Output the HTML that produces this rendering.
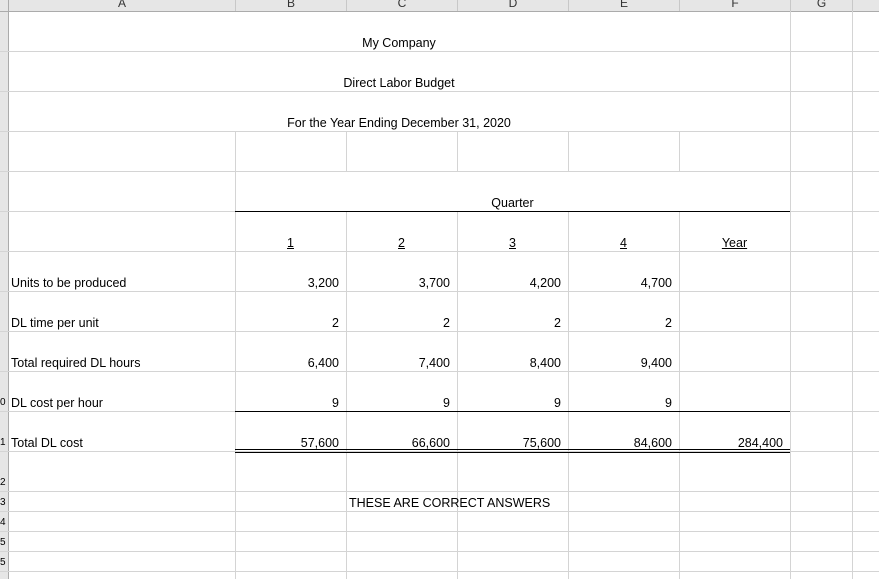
<!DOCTYPE html>
<html><head><meta charset="utf-8"><style>
body{margin:0;width:879px;height:579px;overflow:hidden;background:#fff;position:relative;font-family:"Liberation Sans",Arial,sans-serif;font-size:12.5px;color:#000}
.h{position:absolute;left:0;width:879px;height:1px;background:#d4d4d4}
.v{position:absolute;top:11px;width:1px;height:568px;background:#d4d4d4}
.t{position:absolute;white-space:nowrap;line-height:14px}
.r{text-align:right}
.c{text-align:center}
.b{position:absolute;height:1px;background:#000}
.hd{position:absolute;top:0;height:11px;background:#e6e6e6;border-right:1px solid #c8c8c8;font-size:12px;line-height:6px;text-align:center;overflow:hidden;color:#333}
</style></head><body>
<div class="hd" style="left:0;width:8px;height:579px;background:#e6e6e6"></div>
<div class="hd" style="left:9px;width:226px">A</div>
<div class="hd" style="left:236px;width:110px">B</div>
<div class="hd" style="left:347px;width:110px">C</div>
<div class="hd" style="left:458px;width:110px">D</div>
<div class="hd" style="left:569px;width:110px">E</div>
<div class="hd" style="left:680px;width:110px">F</div>
<div class="hd" style="left:791px;width:61px">G</div>
<div class="hd" style="left:853px;width:26px"></div>
<div style="position:absolute;left:0;top:11px;width:879px;height:1px;background:#ababab"></div>
<div style="position:absolute;left:8px;top:0;width:1px;height:579px;background:#ababab"></div>

<div class="h" style="top:51px"></div><div class="h" style="top:91px"></div><div class="h" style="top:131px"></div><div class="h" style="top:171px"></div><div class="h" style="top:211px"></div><div class="h" style="top:251px"></div><div class="h" style="top:291px"></div><div class="h" style="top:331px"></div><div class="h" style="top:371px"></div><div class="h" style="top:411px"></div><div class="h" style="top:451px"></div><div class="h" style="top:491px"></div><div class="h" style="top:511px"></div><div class="h" style="top:531px"></div><div class="h" style="top:551px"></div><div class="h" style="top:571px"></div>
<div style="position:absolute;left:9px;top:12px;width:781px;height:119px;background:#fff"></div>
<div class="h" style="top:51px;left:9px;width:870px"></div><div class="h" style="top:91px;left:9px;width:870px"></div>

<div class="v" style="left:235px;top:131px;height:448px"></div>
<div class="v" style="left:346px;top:131px;height:448px"></div>
<div class="v" style="left:457px;top:131px;height:40px"></div><div class="v" style="left:457px;top:211px;height:368px"></div>
<div class="v" style="left:568px;top:131px;height:40px"></div><div class="v" style="left:568px;top:211px;height:368px"></div>
<div class="v" style="left:679px;top:131px;height:40px"></div><div class="v" style="left:679px;top:211px;height:368px"></div>
<div class="v" style="left:790px"></div>
<div class="v" style="left:852px"></div>
<div style="position:absolute;left:236px;top:172px;width:554px;height:39px;background:#fff"></div>

<div class="b" style="left:235px;width:555px;top:211px"></div>
<div class="b" style="left:235px;width:555px;top:411px"></div>
<div class="b" style="left:235px;width:555px;top:449px"></div>
<div class="b" style="left:235px;width:555px;top:452px"></div>

<div class="t c" style="left:8px;width:782px;top:36px">My Company</div>
<div class="t c" style="left:8px;width:782px;top:76px">Direct Labor Budget</div>
<div class="t c" style="left:8px;width:782px;top:116px">For the Year Ending December 31, 2020</div>
<div class="t c" style="left:235px;width:555px;top:196px">Quarter</div>
<div class="t c" style="left:235px;width:111px;top:236px"><u>1</u></div>
<div class="t c" style="left:346px;width:111px;top:236px"><u>2</u></div>
<div class="t c" style="left:457px;width:111px;top:236px"><u>3</u></div>
<div class="t c" style="left:568px;width:111px;top:236px"><u>4</u></div>
<div class="t c" style="left:679px;width:111px;top:236px"><u>Year</u></div>

<div class="t" style="left:11px;top:276px">Units to be produced</div>
<div class="t" style="left:11px;top:316px">DL time per unit</div>
<div class="t" style="left:11px;top:356px">Total required DL hours</div>
<div class="t" style="left:11px;top:396px">DL cost per hour</div>
<div class="t" style="left:11px;top:436px">Total DL cost</div>
<div class="t" style="left:0;top:396px;font-size:10px">0</div>
<div class="t" style="left:0;top:436px;font-size:10px">1</div>
<div class="t" style="left:0;top:476px;font-size:10px">2</div>
<div class="t" style="left:0;top:496px;font-size:10px">3</div>
<div class="t" style="left:0;top:516px;font-size:10px">4</div>
<div class="t" style="left:0;top:536px;font-size:10px">5</div>
<div class="t" style="left:0;top:556px;font-size:10px">5</div>

<div class="t r" style="left:235px;width:104px;top:276px">3,200</div>
<div class="t r" style="left:346px;width:104px;top:276px">3,700</div>
<div class="t r" style="left:457px;width:104px;top:276px">4,200</div>
<div class="t r" style="left:568px;width:104px;top:276px">4,700</div>
<div class="t r" style="left:235px;width:104px;top:316px">2</div>
<div class="t r" style="left:346px;width:104px;top:316px">2</div>
<div class="t r" style="left:457px;width:104px;top:316px">2</div>
<div class="t r" style="left:568px;width:104px;top:316px">2</div>
<div class="t r" style="left:235px;width:104px;top:356px">6,400</div>
<div class="t r" style="left:346px;width:104px;top:356px">7,400</div>
<div class="t r" style="left:457px;width:104px;top:356px">8,400</div>
<div class="t r" style="left:568px;width:104px;top:356px">9,400</div>
<div class="t r" style="left:235px;width:104px;top:396px">9</div>
<div class="t r" style="left:346px;width:104px;top:396px">9</div>
<div class="t r" style="left:457px;width:104px;top:396px">9</div>
<div class="t r" style="left:568px;width:104px;top:396px">9</div>
<div class="t r" style="left:235px;width:104px;top:436px">57,600</div>
<div class="t r" style="left:346px;width:104px;top:436px">66,600</div>
<div class="t r" style="left:457px;width:104px;top:436px">75,600</div>
<div class="t r" style="left:568px;width:104px;top:436px">84,600</div>
<div class="t r" style="left:679px;width:104px;top:436px">284,400</div>

<div class="t" style="left:349px;top:496px">THESE ARE CORRECT ANSWERS</div>
</body></html>
